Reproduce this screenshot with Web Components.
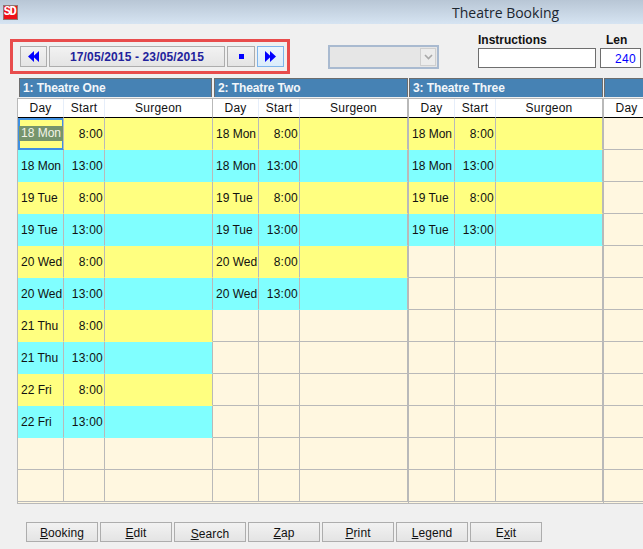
<!DOCTYPE html>
<html><head><meta charset="utf-8"><style>
html,body{margin:0;padding:0;background:#f0f0f0;width:643px;height:549px;overflow:hidden;font:12px "Liberation Sans",Arial,sans-serif;color:#000}
</style></head><body>
<app-titlebar>Theatre Booking</app-titlebar>
<app-toolbar></app-toolbar>
<theatre-board></theatre-board>
<command-bar></command-bar>
<script>
function def(name,css,html){
  customElements.define(name,class extends HTMLElement{
    connectedCallback(){
      if(this.shadowRoot)return;
      const r=this.attachShadow({mode:'open'});
      r.innerHTML='<style>'+css+'</style>'+(typeof html==='function'?html(this):html);
    }
  });
}
def('app-titlebar',`
:host{display:flex;height:24px;background:linear-gradient(#b8c6d5,#d6e4f2);align-items:flex-start;box-sizing:border-box;padding:5px 0 0 3px}
.ico{width:15px;height:15px;background:#ee1118;border:1px solid #8f7672;box-sizing:border-box;color:#fff;font:bold 12px/13px "Liberation Mono",monospace;text-align:center;letter-spacing:-1.500px;text-indent:-2px;overflow:hidden}
.t{margin:-2px 0 0 434px;font:14px/19px "Open Sans",sans-serif;color:#1c2630}
`,`<div class="ico">SD</div><div class="t"><slot></slot></div>`);

def('nav-button',`
:host{display:flex;box-sizing:border-box;height:21px;border:1px solid #adadad;background:linear-gradient(#f2f2f2,#e4e4e4);align-items:center;justify-content:center;color:#0000ff;font:bold 12px "Liberation Sans",sans-serif}
:host([hot]){background:linear-gradient(#ecf5fd,#dbecfb);border-color:#7eb4ea}
:host([date]){color:#22229c;letter-spacing:.14px}
svg{display:block}
`,`<slot></slot>`);

def('app-toolbar',`
:host{display:flex;height:54px;box-sizing:border-box}
.box{margin:15px 0 0 10px;width:280px;height:35px;box-sizing:border-box;border:3px solid #e84c4c;padding:4px 0 0 7px;display:flex;gap:2px}
.combo{margin:21px 0 0 38px;width:111px;height:24px;box-sizing:border-box;border:2px solid #a9bad0;background:#e6e6e6;display:flex;justify-content:flex-end;padding:1px}
.combo i{display:flex;width:16px;border:1px solid #cfcfcf;background:#ececec;align-items:center;justify-content:center;box-sizing:border-box}
.fld{display:flex;flex-direction:column}
.fld b{font:bold 12px/14px "Liberation Sans",sans-serif;height:15px;margin-top:9px;display:block;color:#111}
.inp{height:20px;box-sizing:border-box;border:1px solid #6e6e6e;background:#fff;color:#0000ff;text-align:right;padding:2px 4px 0 0;font:12px/16px "Liberation Sans",sans-serif;letter-spacing:.3px}
.a{margin-left:39px;width:118px}.b{margin-left:4px;width:41px}
.b b{padding-left:6px}
`,`<div class="box">
<nav-button style="width:27px"><svg width="11" height="11" viewBox="0 0 11 11"><path d="M6 0v11L0 5.500zM11 0v11L5 5.500z" fill="#00f"/></svg></nav-button>
<nav-button date style="width:176px">17/05/2015 - 23/05/2015</nav-button>
<nav-button style="width:28px"><svg width="5" height="5"><rect width="5" height="5" fill="#00f"/></svg></nav-button>
<nav-button hot style="width:27px"><svg width="11" height="11" viewBox="0 0 11 11"><path d="M0 0v11L6 5.500zM5 0v11L11 5.500z" fill="#00f"/></svg></nav-button>
</div>
<div class="combo"><i><svg width="9" height="6" viewBox="0 0 9 6"><path d="M1 1l3.500 3.500L8 1" fill="none" stroke="#a8a8a8" stroke-width="1.600"/></svg></i></div>
<div class="fld a"><b>Instructions</b><div class="inp"></div></div>
<div class="fld b"><b>Len</b><div class="inp">240</div></div>`);

def('theatre-panel',`
:host{display:block;flex:none;box-sizing:border-box}
.head{height:19px;box-sizing:border-box;margin-left:var(--lead,0);margin-right:var(--trail,0);background:#4682b4;border:1px solid #6d6d6d;border-width:1px 1px 0 1px;color:#f2f6fa;font:bold 12px/18px "Liberation Sans",sans-serif;padding-left:3px;white-space:nowrap;letter-spacing:-.1px}
.grid{display:grid;grid-template-columns:46px 41px 1fr;border-top:1px solid #b5b5b5;border-bottom:1px solid #b9b9b9;margin-top:1px;border-left:var(--edge,0) solid #b9b9b9;border-right:var(--extra,0) solid #b9b9b9;padding-bottom:1px;background:#fff7e0}
.th{height:18px;background:#fff;text-align:center;font:12px/18px "Liberation Sans",sans-serif;letter-spacing:.2px;color:#111;border-bottom:1px solid #000;border-right:1px solid #e6eefa}
.th.e{border-right-color:#b9b9b9}
.td{box-sizing:border-box;height:32px;border-right:1px solid #b9b9b9;border-bottom:1px solid #b9b9b9;background:#fff7e0;display:flex;align-items:center;font:12px "Liberation Sans",sans-serif;white-space:nowrap;color:#111;min-width:0}
.td.d{padding-left:3px}.td.s{justify-content:flex-end;padding-right:1px;letter-spacing:.25px}
.y{background:#ffff80;border-bottom-color:#ffff80}.c{background:#80ffff;border-bottom-color:#80ffff}
.td.d.sel{padding-left:1px;border-bottom-color:#3f8fe0;box-shadow:inset 2px 2px 0 #3f8fe0,inset -1px -1px 0 #3f8fe0;align-items:center}
.sel span{display:block;flex:1;padding-left:2px;background:#76946c;color:#f4f4e8;line-height:15px}
`,el=>{
  const n=+el.getAttribute('rows')||0,t=el.getAttribute('name')||'';
  const part=el.hasAttribute('partial');
  const days=['18 Mon','18 Mon','19 Tue','19 Tue','20 Wed','20 Wed','21 Thu','21 Thu','22 Fri','22 Fri'];
  let h=`<div class="head">${t}</div><div class="grid"><div class="th">Day</div><div class="th">${part?'':'Start'}</div><div class="th e">${part?'':'Surgeon'}</div>`;
  for(let i=0;i<12;i++){
    const on=i<n,k=on?(i%2?'c':'y'):'';
    const sel=on&&i===0&&el.hasAttribute('selected');
    h+=`<div class="td d ${k} ${sel?'sel':''}">${on?(sel?`<span>${days[i]}</span>`:days[i]):''}</div>`;
    h+=`<div class="td s ${k}">${on?(i%2?'13:00':'8:00'):''}</div><div class="td ${k}"></div>`;
  }
  return h+'</div>';
});

def('theatre-board',`
:host{display:flex;margin-left:17px;height:426px;overflow:hidden}
theatre-panel{flex:none}
`,`<theatre-panel style="width:196px;--edge:1px;--lead:2px;--trail:1px" name="1: Theatre One" rows="10" selected></theatre-panel>
<theatre-panel style="width:196px;--extra:1px;--lead:1px;--trail:1px" name="2: Theatre Two" rows="6"></theatre-panel>
<theatre-panel style="width:195px;--extra:1px;--trail:1px" name="3: Theatre Three" rows="4"></theatre-panel>
<theatre-panel style="width:195px" name="" partial></theatre-panel>`);

def('cmd-button',`
:host{display:flex;width:72px;height:20px;box-sizing:border-box;border:1px solid #adadad;background:linear-gradient(#f2f2f2,#e4e4e4);align-items:center;justify-content:center;font:12px "Liberation Sans",sans-serif;color:#111;letter-spacing:.1px;padding-top:1px}
:host([low]){padding-top:3px}
u{text-decoration:underline}
`,`<slot></slot>`);

def('command-bar',`
:host{display:flex;gap:2px;margin:18px 0 0 26px}
`,`<cmd-button><u>B</u>ooking</cmd-button><cmd-button><u>E</u>dit</cmd-button><cmd-button low><u>S</u>earch</cmd-button><cmd-button><u>Z</u>ap</cmd-button><cmd-button><u>P</u>rint</cmd-button><cmd-button><u>L</u>egend</cmd-button><cmd-button>E<u>x</u>it</cmd-button>`);
</script>
</body></html>
